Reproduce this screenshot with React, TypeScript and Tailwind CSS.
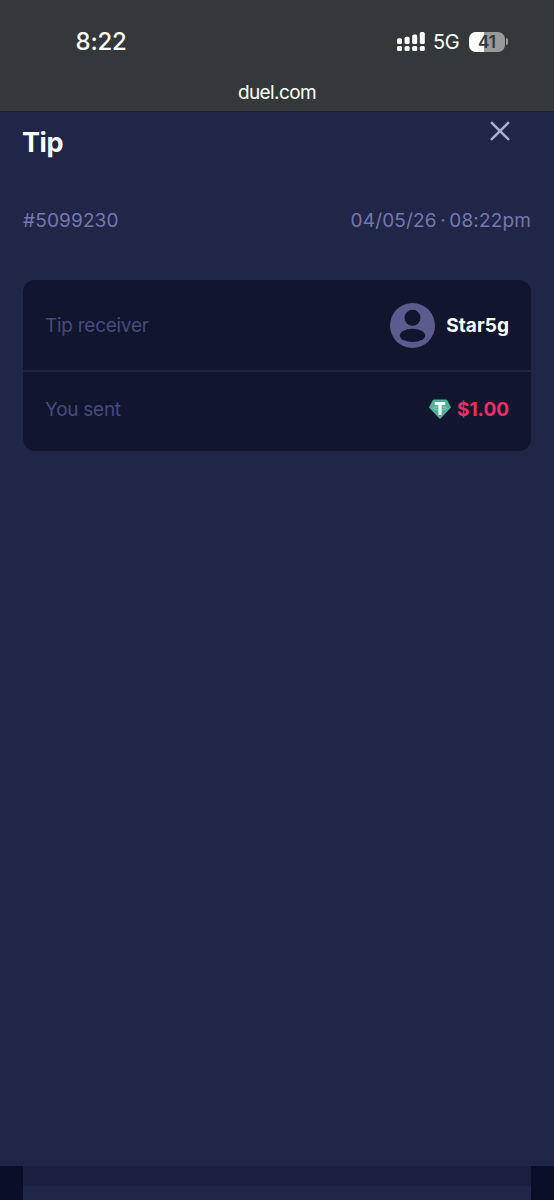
import type { ReactNode } from 'react'

function SignalIcon() {
  return (
    <svg width="28" height="20" viewBox="0 0 28 20" fill="#fff">
      <rect x="0" y="6.3" width="5" height="5.8" rx="1.6" />
      <rect x="7.6" y="4.7" width="5" height="7.4" rx="1.6" />
      <rect x="15.2" y="2.5" width="5" height="9.6" rx="1.6" />
      <rect x="22.8" y="0" width="5" height="12.1" rx="1.6" />
      <rect x="0" y="14" width="5" height="5" rx="1.6" />
      <rect x="7.6" y="14" width="5" height="5" rx="1.6" />
      <rect x="15.2" y="14" width="5" height="5" rx="1.6" />
      <rect x="22.8" y="14" width="5" height="5" rx="1.6" />
    </svg>
  )
}

function Battery({ level }: { level: number }) {
  return (
    <div className="flex items-center gap-px">
      <div className="relative flex h-5 w-9 items-center justify-center overflow-hidden rounded-[7px] bg-[#98999b]">
        <div className="absolute inset-y-0 left-0 bg-white" style={{ width: `${level}%` }} />
        <span className="relative text-[17px] leading-5 font-semibold text-[#34383a]">{level}</span>
      </div>
      <div className="h-[7px] w-[2px] rounded-r-full bg-[#98999b]" />
    </div>
  )
}

function StatusBar() {
  return (
    <div className="flex h-[83px] items-center justify-between pr-[46px] pl-[75.5px]">
      <span className="pt-px text-[24px] leading-7 font-medium tracking-[-0.2px]">8:22</span>
      <div className="flex items-center">
        <SignalIcon />
        <span className="mr-[9px] ml-2 w-[27px] text-[20px] leading-6 tracking-[-0.3px] whitespace-nowrap">5G</span>
        <Battery level={41} />
      </div>
    </div>
  )
}

function CloseIcon() {
  return (
    <svg width="20" height="20" viewBox="0 0 20 20" stroke="#a9aed2" strokeWidth="2.6" strokeLinecap="round">
      <path d="M1.8 1.8 18.2 18.2M18.2 1.8 1.8 18.2" />
    </svg>
  )
}

function Avatar() {
  return (
    <svg width="45" height="45" viewBox="0 0 45 45">
      <circle cx="22.5" cy="22.5" r="22.5" fill="#5c5b8d" />
      <circle cx="22.5" cy="14.8" r="8" fill="#11162f" />
      <ellipse cx="22.5" cy="32.4" rx="12.7" ry="6.6" fill="#11162f" />
    </svg>
  )
}

function TetherIcon() {
  return (
    <svg width="22" height="20" viewBox="0 0 22 20">
      <path d="M4.6.5h12.8a.8.8 0 0 1 .7.4l3.7 7a.9.9 0 0 1-.2 1.1L11.6 19.5a.9.9 0 0 1-1.2 0L.4 9a.9.9 0 0 1-.2-1.1l3.7-7a.8.8 0 0 1 .7-.4Z" fill="#50af95" />
      <ellipse cx="11" cy="9.4" rx="6.7" ry="1.5" fill="none" stroke="#b5ddd0" strokeWidth=".6" />
      <path d="M5.8 3h10.4v3h-3.6v10h-3.2V6H5.8Z" fill="#fff" />
    </svg>
  )
}

function Row({ label, className, children }: { label: string; className: string; children: ReactNode }) {
  return (
    <div className={`flex items-center justify-between px-[22px] ${className}`}>
      <span className="pt-[2px] text-[19px] tracking-[-0.27px] text-[#474a7b]">{label}</span>
      {children}
    </div>
  )
}

export default function App() {
  return (
    <div className="flex h-[1200px] w-[554px] flex-col overflow-hidden bg-[#202648] font-['Inter',sans-serif] text-white">
      <header className="h-28 shrink-0 border-b border-[#1a1d2b] bg-[#34383a]">
        <StatusBar />
        <div className="text-center text-[19px] leading-5 tracking-[-0.6px]">duel.com</div>
      </header>

      <main className="flex flex-1 flex-col px-[23px]">
        <div className="flex h-[62px] justify-between pt-[9px] pr-[21px]">
          <h1 className="-ml-px pt-[6px] text-[27px] leading-8 font-bold tracking-[-0.4px]">Tip</h1>
          <button aria-label="Close" className="h-5">
            <CloseIcon />
          </button>
        </div>

        <div className="mt-[35px] flex h-6 items-center justify-between text-[19px] tracking-[0.15px] text-[#7478ad]">
          <span>#5099230</span>
          <span className="[word-spacing:-2px]">04/05/26 · 08:22pm</span>
        </div>

        <section className="mt-[47px] h-[171px] rounded-xl bg-[#11162f]">
          <Row label="Tip receiver" className="h-[92px] border-b-2 border-[#1d2245]">
            <div className="flex items-center gap-[11px]">
              <Avatar />
              <span className="pt-[2px] text-[19px] font-bold tracking-[0.05px]">Star5g</span>
            </div>
          </Row>
          <Row label="You sent" className="h-[74px]">
            <div className="flex items-center gap-[6px]">
              <TetherIcon />
              <span className="pt-[2px] text-[19px] font-bold text-[#ee2f66]">$1.00</span>
            </div>
          </Row>
        </section>
      </main>

      {/* Page showing underneath the modal */}
      <footer className="h-[34px] shrink-0 bg-[#0b0e29] px-[23px]">
        <div className="h-full bg-[#202648]">
          <div className="h-5 bg-[#1b1e3e]" />
        </div>
      </footer>
    </div>
  )
}
